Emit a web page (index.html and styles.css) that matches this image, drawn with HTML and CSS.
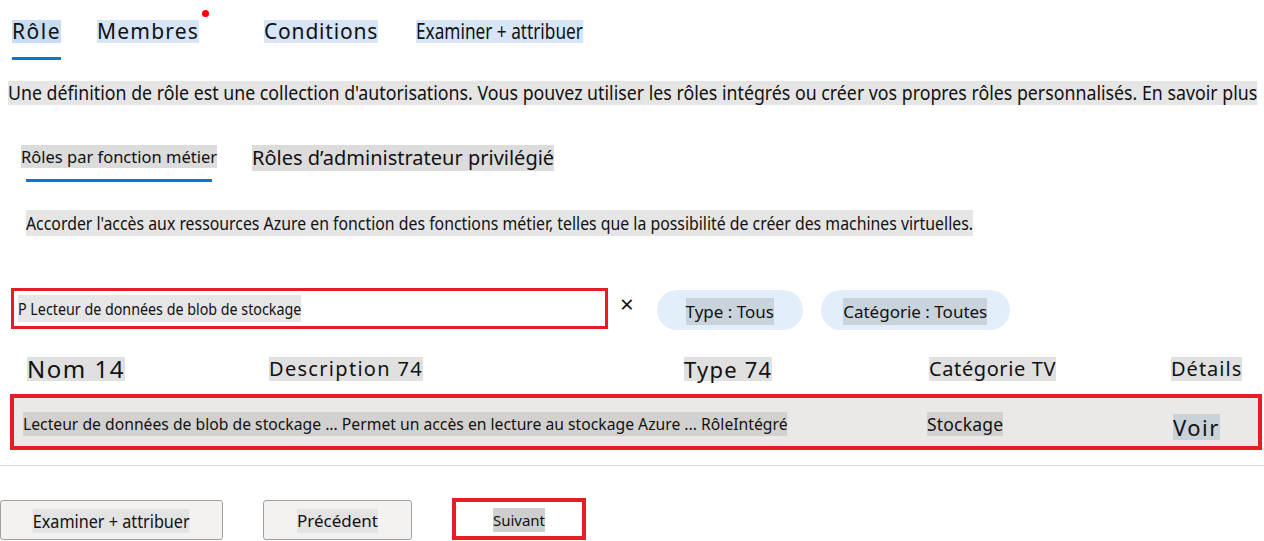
FILE: index.html
```html
<!DOCTYPE html>
<html>
	<head>
		<title>Ajouter une attribution de rôle</title>
		<link rel="stylesheet" href="styles.css">
	</head>
	<body>
		<nav class="tabs">
			<a class="tab active"><span class="hl">Rôle</span></a>
			<a class="tab dot"><span class="hl">Membres</span></a>
			<a class="tab"><span class="hl">Conditions</span></a>
			<a class="tab narrow"><span class="hl">Examiner + attribuer</span></a>
		</nav>

		<p class="intro"><span class="hl">Une définition de rôle est une collection d'autorisations. Vous pouvez utiliser les rôles intégrés ou créer vos propres rôles personnalisés. En savoir plus</span></p>

		<div class="subtabs">
			<a class="subtab active"><span class="hl">Rôles par fonction métier</span></a>
			<a class="subtab big"><span class="hl">Rôles d’administrateur privilégié</span></a>
		</div>

		<p class="hint"><span class="hl">Accorder l'accès aux ressources Azure en fonction des fonctions métier, telles que la possibilité de créer des machines virtuelles.</span></p>

		<div class="filters">
			<div class="search"><span class="hl">P Lecteur de données de blob de stockage</span></div>
			<span class="clear">×</span>
			<button class="pill type"><span class="hl">Type : Tous</span></button>
			<button class="pill cat"><span class="hl">Catégorie : Toutes</span></button>
		</div>

		<div class="grid head">
			<div class="h-name"><span class="hl">Nom 14</span></div>
			<div class="h-desc"><span class="hl">Description 74</span></div>
			<div class="h-type"><span class="hl">Type 74</span></div>
			<div class="h-cat"><span class="hl">Catégorie TV</span></div>
			<div class="h-det"><span class="hl">Détails</span></div>
		</div>

		<div class="grid row">
			<div class="c-wide"><span class="hl">Lecteur de données de blob de stockage ... Permet un accès en lecture au stockage Azure ... RôleIntégré</span></div>
			<div class="c-cat"><span class="hl">Stockage</span></div>
			<div class="c-det"><a class="view">Voir</a></div>
		</div>

		<hr>

		<footer class="actions">
			<button class="btn wide"><span class="hl">Examiner + attribuer</span></button>
			<button class="btn"><span class="hl">Précédent</span></button>
			<button class="btn next"><span class="hl">Suivant</span></button>
		</footer>
	</body>
</html>
```

FILE: styles.css
```css
* {
	margin: 0; padding: 0;
	box-sizing: border-box;
}

body {
	font-family: "Noto Sans", sans-serif;
	color: #111;
	background: #fff;
	width: 1264px;
	height: 541px;
	overflow: hidden;
}

a {
	cursor: pointer;
}

.hl {
	display: inline-block;
	white-space: nowrap;
}

/* top tabs */
.tabs {
	display: flex;
	align-items: flex-start;
	padding: 17px 0 0 12px;
	height: 70px;
}

.tab {
	font-size: 21px;
	letter-spacing: 0.8px;
	padding-bottom: 12px;
	border-bottom: 3px solid transparent;
	margin-right: 36px;
	position: relative;
}

.tab .hl {
	line-height: 23px;
	background: #d7e5f7;
}

.tab.active {
	letter-spacing: 1.5px;
	border-bottom-color: #0078d4;
}

.tab.active .hl {
	background: #c8dcf4;
}

.tab.dot {
	letter-spacing: 1.2px;
	margin-right: 65px;
}

.tab.dot::after {
	content: "";
	position: absolute;
	right: -10px;
	top: -7px;
	width: 7px;
	height: 7px;
	border-radius: 50%;
	background: #f00;
}

.tab.narrow {
	font-size: 21px;
	letter-spacing: 0;
	margin-left: 2px;
}

.tab.narrow .hl {
	transform: scaleX(0.82);
	transform-origin: left center;
	margin-top: 2px;
}

/* intro */
.intro {
	padding: 10px 0 0 8px;
	font-size: 19px;
	height: 66px;
	overflow: hidden;
}

.intro .hl {
	line-height: 24px;
	background: #e5e5e5;
	transform: scaleX(0.935);
	transform-origin: left center;
}

/* sub tabs */
.subtabs {
	display: flex;
	align-items: flex-start;
	padding: 9px 0 0 21px;
	height: 60px;
}

.subtab {
	font-size: 16.5px;
	margin-right: 35px;
}

.subtab .hl {
	line-height: 23px;
	background: #dcdcdc;
}

.subtab.active::after {
	content: "";
	display: block;
	height: 3px;
	margin: 11px 5px 0 5px;
	background: #0078d4;
}

.subtab.big {
	font-size: 20px;
	margin-top: -1px;
}

.subtab.big .hl {
	line-height: 26px;
}

.hint {
	padding: 14px 0 0 26px;
	font-size: 18px;
	height: 87px;
	overflow: hidden;
}

.hint .hl {
	line-height: 26px;
	background: #e5e5e5;
	transform: scaleX(0.88);
	transform-origin: left center;
}

/* search and filters */
.filters {
	display: flex;
	align-items: center;
	padding-left: 11px;
	height: 50px;
}

.search {
	width: 597px;
	height: 41px;
	border: 3px solid #e81c24;
	padding: 4px 4px;
	font-size: 17px;
	overflow: hidden;
}

.search .hl {
	line-height: 27px;
	background: #e6e6e6;
	transform: scaleX(0.84);
	transform-origin: left center;
}

.clear {
	font-size: 24px;
	margin: -10px 23px 0 12px;
}

.pill {
	font-family: inherit;
	border: none;
	background: #e2eefa;
	border-radius: 20px;
	height: 40px;
	margin: 4px 18px 0 0;
	font-size: 17px;
	color: #111;
	text-align: center;
}

.pill.type {
	width: 146px;
}

.pill.cat {
	width: 189px;
}

.pill .hl {
	line-height: 27px;
	background: #c8d3dc;
	margin-top: 3px;
}

/* table */
.grid {
	display: grid;
	grid-template-columns: 242px 415px 245px 243px 1fr;
	align-items: center;
}

.grid.head {
	height: 61px;
	padding: 10px 0 0 27px;
	font-size: 20px;
}

.head .hl {
	line-height: 24px;
	background: #e0e0e0;
}

.h-name {
	font-size: 24px;
	letter-spacing: 1.5px;
}

.h-desc {
	letter-spacing: 1.3px;
}

.h-type {
	font-size: 22px;
	letter-spacing: 1.2px;
}

.h-cat {
	letter-spacing: 0.6px;
}

.h-det {
	letter-spacing: 1px;
	margin-left: -1px;
}

.grid.row {
	margin: 0 2px 0 10px;
	height: 56px;
	border: 4px solid #e81c24;
	background: #ebe9e7;
	padding: 4px 0 0 9px;
	font-size: 17px;
}

.row .hl {
	line-height: 24px;
	background: #d3d1cf;
}

.c-wide {
	grid-column: 1 / 4;
	overflow: hidden;
}

.c-wide .hl {
	transform: scaleX(0.924);
	transform-origin: left center;
}

.row .c-cat {
	font-size: 17.5px;
	letter-spacing: 0.2px;
	padding-left: 2px;
}

.view {
	display: inline-block;
	font-size: 22px;
	line-height: 26px;
	letter-spacing: 1.5px;
	background: #c9d1d9;
	margin: 6px 0 0 5px;
}

hr {
	border: none;
	border-top: 1px solid #dcdcdc;
	margin-top: 15px;
}

/* footer buttons */
.actions {
	display: flex;
	align-items: flex-start;
	gap: 40px;
	padding-top: 34px;
}

.btn {
	font-family: inherit;
	font-size: 17px;
	color: #111;
	background: #f3f2f1;
	border: 1px solid #a0a0a0;
	border-radius: 3px;
	height: 40px;
	width: 149px;
}

.btn.wide {
	width: 223px;
	font-size: 18px;
}

.btn.wide .hl {
	transform: scaleX(0.9);
}

.btn .hl {
	line-height: 24px;
	background: #e3e3e3;
	margin-top: 2px;
}

.btn.next {
	width: 134px;
	height: 42px;
	margin-top: -2px;
	background: #fff;
	border: 4px solid #e81c24;
	border-radius: 0;
	font-size: 15px;
}

.btn.next .hl {
	background: #cfcfcf;
}
```
